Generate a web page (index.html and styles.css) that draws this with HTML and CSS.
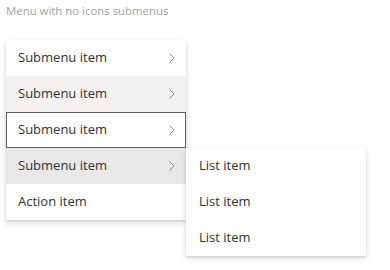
FILE: index.html
```html
<!DOCTYPE html>
<html>
<head>
<meta charset="utf-8">
<link rel="stylesheet" href="styles.css">
</head>
<body>
<div class="title">Menu with no icons submenus</div>
<ul class="menu">
  <li class="item"><span class="label">Submenu item</span><svg class="chev" width="8" height="12" viewBox="0 0 8 12"><path d="M1.5 1.5 L6 6 L1.5 10.5" fill="none" stroke="#8a8886" stroke-width="1"/></svg></li>
  <li class="item hover"><span class="label">Submenu item</span><svg class="chev" width="8" height="12" viewBox="0 0 8 12"><path d="M1.5 1.5 L6 6 L1.5 10.5" fill="none" stroke="#8a8886" stroke-width="1"/></svg></li>
  <li class="item focus"><span class="label">Submenu item</span><svg class="chev" width="8" height="12" viewBox="0 0 8 12"><path d="M1.5 1.5 L6 6 L1.5 10.5" fill="none" stroke="#8a8886" stroke-width="1"/></svg></li>
  <li class="item open"><span class="label">Submenu item</span><svg class="chev" width="8" height="12" viewBox="0 0 8 12"><path d="M1.5 1.5 L6 6 L1.5 10.5" fill="none" stroke="#8a8886" stroke-width="1"/></svg>
    <ul class="submenu">
      <li class="subitem">List item</li>
      <li class="subitem">List item</li>
      <li class="subitem">List item</li>
    </ul>
  </li>
  <li class="item"><span class="label">Action item</span></li>
</ul>
</body>
</html>
```
FILE: styles.css
```css
html, body {
  margin: 0;
  padding: 0;
  background: #ffffff;
}
html {
  height: 100%;
}
body {
  box-sizing: border-box;
  min-height: 270px;
  height: 100%;
  padding: 3px 6px;
  font-family: "Open Sans", "Noto Sans", sans-serif;
  color: #323130;
}
.title {
  font-size: 11.4px;
  line-height: 16px;
  color: #a19f9d;
  height: 16px;
}
.menu {
  list-style: none;
  margin: 21px 0 0 0;
  padding: 0;
  width: 180px;
  background: #fff;
  box-shadow: 0 3.2px 7.2px rgba(0,0,0,0.132), 0 0.6px 1.8px rgba(0,0,0,0.108);
}
.item {
  position: relative;
  box-sizing: border-box;
  height: 36px;
  display: flex;
  align-items: center;
  justify-content: space-between;
  padding: 0 10px 3px 12px;
  font-size: 13px;
}
.label {
  white-space: nowrap;
}
.chev {
  display: block;
  margin-top: 2px;
}
.hover {
  background: #f3f2f1;
}
.open {
  background: #e8e8e8;
  z-index: 5;
}
.focus::after {
  content: "";
  position: absolute;
  inset: 0;
  border: 1px solid #5f5f5f;
}
.submenu {
  position: absolute;
  left: 100%;
  top: 0;
  z-index: 10;
  list-style: none;
  margin: 0;
  padding: 0;
  width: 180px;
  background: #fff;
  box-shadow: 0 3.2px 7.2px rgba(0,0,0,0.132), 0 0.6px 1.8px rgba(0,0,0,0.108);
}
.subitem {
  box-sizing: border-box;
  height: 36px;
  display: flex;
  align-items: center;
  padding: 0 12px 3px 13px;
  font-size: 13px;
  white-space: nowrap;
}
```
